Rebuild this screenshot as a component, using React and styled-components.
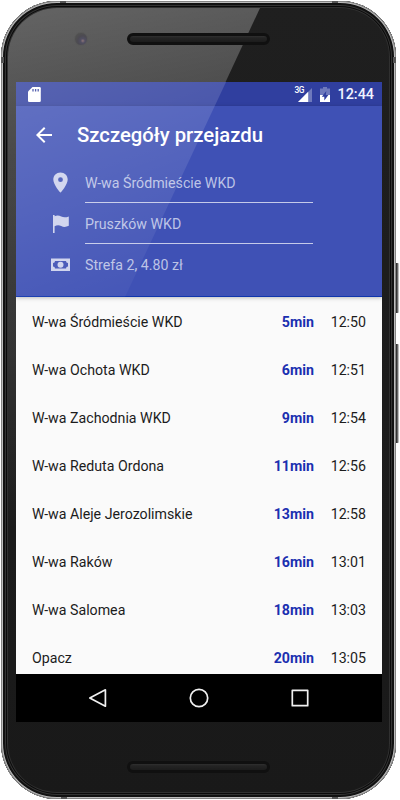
import React from 'react';
import styled, { createGlobalStyle } from 'styled-components';

const GlobalStyle = createGlobalStyle`
  * {
    box-sizing: border-box;
  }
  body {
    margin: 0;
    background: #fff;
    font-family: Roboto, sans-serif;
  }
`;

const Stage = styled.div`
  position: relative;
  width: 400px;
  height: 800px;
  padding: 1px 4px 1px 1px;
  overflow: hidden;
`;

const Phone = styled.div`
  position: relative;
  display: flex;
  flex-direction: column;
  width: 395px;
  height: 798px;
  padding: 81px 14px 0 15px;
  border-radius: 56px;
  background: linear-gradient(180deg, #1f1f1f 0, #191919 100%);
  box-shadow: inset 0 0 0 1px #858585, inset 0 0 0 2px #bdbdbd, inset 0 0 0 4px #111,
    inset 0 0 0 5px #333, inset 0 0 0 6px #0a0a0a, inset 0 0 0 7px #303030;
`;

const BodyGlare = styled.div`
  position: absolute;
  left: 7px;
  top: 7px;
  width: 260px;
  height: 560px;
  border-radius: 49px 0 0 0;
  background: linear-gradient(168deg, rgba(255, 255, 255, 0.31) 0, rgba(255, 255, 255, 0.19) 25%, rgba(255, 255, 255, 0.1) 55%, rgba(255, 255, 255, 0) 85%);
  clip-path: polygon(0 0, 252px 0, 0 542px);
`;

const SideKey = styled.div`
  position: absolute;
  left: 396px;
  top: ${props => props.$top}px;
  width: 3px;
  height: ${props => props.$height}px;
  border-radius: 0 1px 1px 0;
  background: linear-gradient(90deg, #333 0 1px, #666 1px 2px, #bbb 2px);
`;

const Band = styled.div`
  position: absolute;
  left: ${props => props.$left}px;
  top: ${props => props.$top}px;
  width: ${props => props.$width || 6}px;
  height: ${props => props.$height || 2}px;
  background: #555;
`;

const Speaker = styled.div`
  position: absolute;
  left: 126px;
  top: ${props => props.$top}px;
  width: 143px;
  height: 12px;
  border: 3px solid #101010;
  border-radius: 6px;
  background: linear-gradient(180deg, #303030 0, #242424 30%, #1c1c1c 100%);
`;

const Camera = styled.div`
  position: absolute;
  left: 73px;
  top: 31px;
  width: 14px;
  height: 14px;
  border: 1px solid #595959;
  border-radius: 50%;
  background: radial-gradient(circle at 65% 65%, #8c7478 0, #514f62 20%, #4c4a52 45%, #505050 70%);
`;

const Screen = styled.div`
  position: relative;
  display: flex;
  flex-direction: column;
  width: 366px;
  height: 640px;
  overflow: hidden;
  background: #fafafa;
`;

const ScreenGlare = styled.div`
  position: absolute;
  left: 0;
  top: 0;
  width: 210px;
  height: 215px;
  pointer-events: none;
  background: linear-gradient(160deg, rgba(255, 255, 255, 0.19) 0, rgba(255, 255, 255, 0.1) 50%, rgba(255, 255, 255, 0.01) 100%);
  clip-path: polygon(0 0, 210px 0, 109px 215px, 0 215px);
`;

const StatusBar = styled.div`
  display: flex;
  flex: none;
  align-items: center;
  height: 24px;
  padding: 0 8px 0 12px;
  background: #303f9f;
  color: #fff;
`;

const StatusRight = styled.div`
  display: flex;
  align-items: center;
  margin-left: auto;
`;

const Clock = styled.div`
  margin-left: 7px;
  padding-top: 2px;
  font-size: 14.4px;
  line-height: 24px;
  font-weight: 500;
  color: #f1f3ff;
`;

const Header = styled.div`
  flex: none;
  height: 191px;
  padding-top: 8px;
  background: #3f51b5;
  border-bottom: 1px solid #0f35ad;
  box-shadow: 0 1px 4px rgba(0, 0, 0, 0.25);
`;

const TitleRow = styled.div`
  display: flex;
  align-items: center;
  height: 41px;
  padding-left: 16px;
  color: #fff;
`;

const Title = styled.div`
  margin-left: 21px;
  font-size: 20.3px;
  font-weight: 500;
  white-space: nowrap;
`;

const Fields = styled.div`
  padding: 7px 0 0 33px;
`;

const Field = styled.div`
  display: flex;
  align-items: center;
  height: 41px;
  color: #cdd2ed;
`;

const FieldValue = styled.div`
  width: 228px;
  height: 41px;
  margin-left: 12px;
  padding-top: 1px;
  border-bottom: ${props => (props.$underlined ? '1px solid #c5cae9' : 'none')};
  font-size: 14.2px;
  line-height: 41px;
  color: #bcc3e6;
  white-space: nowrap;
`;

const StopList = styled.div`
  flex: 1;
  min-height: 0;
  padding-top: 1px;
  overflow: hidden;
`;

const Stop = styled.div`
  display: flex;
  align-items: center;
  height: 48px;
  padding: 0 16px;
  font-size: 14.2px;
  color: #1c1c1c;
`;

const StopName = styled.div`
  flex: 1;
`;

const Duration = styled.div`
  font-weight: 700;
  color: #1a2fb0;
`;

const StopTime = styled.div`
  width: 52px;
  text-align: right;
`;

const NavBar = styled.div`
  display: flex;
  flex: none;
  align-items: center;
  justify-content: center;
  gap: 77px;
  height: 48px;
  background: #000;
`;

const stops = [
  { name: 'W-wa Śródmieście WKD', duration: '5min', time: '12:50' },
  { name: 'W-wa Ochota WKD', duration: '6min', time: '12:51' },
  { name: 'W-wa Zachodnia WKD', duration: '9min', time: '12:54' },
  { name: 'W-wa Reduta Ordona', duration: '11min', time: '12:56' },
  { name: 'W-wa Aleje Jerozolimskie', duration: '13min', time: '12:58' },
  { name: 'W-wa Raków', duration: '16min', time: '13:01' },
  { name: 'W-wa Salomea', duration: '18min', time: '13:03' },
  { name: 'Opacz', duration: '20min', time: '13:05' },
];

const Icon = ({ d, size = 24 }) => (
  <svg width={size} height={size} viewBox="0 0 24 24" fill="currentColor">
    <path d={d} />
  </svg>
);

const icons = {
  back: 'M20 11H7.83l5.59-5.59L12 4l-8 8 8 8 1.41-1.41L7.83 13H20v-2z',
  place: 'M11.5 1.5C7.4 1.5 4.3 4.600 4.300 8.600c0 5.400 7.200 13.200 7.200 13.200s7.200-7.800 7.200-13.200c0-4-3.100-7.100-7.200-7.100zm0 9.600a2.400 2.400 0 1 1 0-4.800 2.400 2.400 0 0 1 0 4.800z',
};

const SdCard = () => (
  <svg width="13" height="15" viewBox="0 0 13 15">
    <path d="M4.5 0H11.5Q12.8 0 12.8 1.3V13.7Q12.8 15 11.5 15H1.3Q0 15 0 13.7V4.5Z" fill="#fff" />
    <path d="M5 2v2.6M7.6 2v2.6M10.2 2v2.6" stroke="#303f9f" strokeWidth="1.3" />
  </svg>
);

const Network = styled.div`
  display: flex;
  align-items: flex-start;
  height: 15px;
`;

const NetworkType = styled.div`
  width: 9px;
  font-size: 8.4px;
  line-height: 7px;
  font-weight: 500;
  letter-spacing: -0.6px;
`;

const SignalGraphic = styled.svg`
  margin-left: -5px;
`;

const BatteryGraphic = styled.svg`
  margin-left: 8px;
`;

const Signal = () => (
  <SignalGraphic width="14" height="15" viewBox="0 0 14 15">
    <path d="M14 1V15H0Z" fill="#fff" fillOpacity=".3" />
    <path d="M10.2 4.8V15H0Z" fill="#fff" />
  </SignalGraphic>
);

const Battery = () => (
  <BatteryGraphic width="10" height="15" viewBox="0 0 10 15">
    <path d="M3 0h4v1.6h3V15H0V1.6h3Z" fill="#fff" fillOpacity=".3" />
    <path d="M0 8h10v7H0Z" fill="#fff" />
    <path d="M6.3 4 1.8 9.7h2.5V13.6L8.4 8H5.8Z" fill="#303f9f" />
  </BatteryGraphic>
);

const Flag = () => (
  <svg width="24" height="24" viewBox="0 0 24 24" fill="currentColor">
    <path d="M4 3h1.600v1.200c2.400-.9 4.400-.8 6.600.3 2.500 1.200 4.800 1 7.600-.1v9.400c-2.700 1.300-5.300 1.500-7.600.2-2.300-1.200-4.600-.9-6.600.2V21H4Z" />
  </svg>
);

const Cash = () => (
  <svg width="24" height="24" viewBox="0 0 24 24" fill="currentColor">
    <path fillRule="evenodd" d="M2 5.500h19v12.500H2ZM6 8A2 2 0 0 1 4 10v3.600A2 2 0 0 1 6 15.600h11A2 2 0 0 1 19 13.600V10A2 2 0 0 1 17 8Z" />
    <circle cx="11.500" cy="11.800" r="3" />
  </svg>
);

const NavIcon = ({ children }) => (
  <svg width="24" height="24" viewBox="0 0 24 24" fill="none" stroke="#f1f1f1" strokeWidth="1.7" strokeLinejoin="round">
    {children}
  </svg>
);

const App = () => (
  <>
    <GlobalStyle />
    <Stage>
      <SideKey $top={263} $height={50} />
      <SideKey $top={344} $height={99} />
      <Phone>
        <BodyGlare />
        <Band $left={59} $top={0} />
        <Band $left={331} $top={0} />
        <Band $left={0} $top={56} $width={3} $height={6} />
        <Band $left={392} $top={56} $width={3} $height={6} />
        <Band $left={60} $top={796} />
        <Band $left={331} $top={796} />
        <Camera />
        <Speaker $top={32} />
        <Screen>
          <StatusBar>
            <SdCard />
            <StatusRight>
              <Network>
                <NetworkType>3G</NetworkType>
                <Signal />
              </Network>
              <Battery />
              <Clock>12:44</Clock>
            </StatusRight>
          </StatusBar>
          <Header>
            <TitleRow>
              <Icon d={icons.back} />
              <Title>Szczegóły przejazdu</Title>
            </TitleRow>
            <Fields>
              <Field>
                <Icon d={icons.place} />
                <FieldValue $underlined>W-wa Śródmieście WKD</FieldValue>
              </Field>
              <Field>
                <Flag />
                <FieldValue $underlined>Pruszków WKD</FieldValue>
              </Field>
              <Field>
                <Cash />
                <FieldValue>Strefa 2, 4.80 zł</FieldValue>
              </Field>
            </Fields>
          </Header>
          <StopList>
            {stops.map(stop => (
              <Stop key={stop.name}>
                <StopName>{stop.name}</StopName>
                <Duration>{stop.duration}</Duration>
                <StopTime>{stop.time}</StopTime>
              </Stop>
            ))}
          </StopList>
          <NavBar>
            <NavIcon>
              <path d="M19.400 3.800v16.400L3.800 12Z" />
            </NavIcon>
            <NavIcon>
              <circle cx="12" cy="12" r="8.700" />
            </NavIcon>
            <NavIcon>
              <path d="M4.300 4.300h15.400v15.400H4.300Z" />
            </NavIcon>
          </NavBar>
          <ScreenGlare />
        </Screen>
        <Speaker $top={760} />
      </Phone>
    </Stage>
  </>
);

export default App;
